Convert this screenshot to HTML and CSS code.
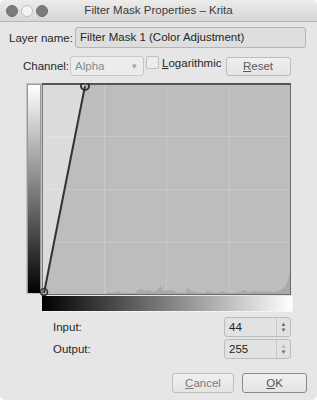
FILE: index.html
```html
<!DOCTYPE html>
<html lang="en">
<head>
    <meta charset="UTF-8">
    <meta name="viewport" content="width=device-width, initial-scale=1.0">
    <title>Filter Mask Properties – Krita</title>
    <link rel="stylesheet" href="styles.css">
</head>
<body>
    <div class="window">
        <div class="titlebar">
            <div class="lights">
                <span class="light dark"></span>
                <span class="light"></span>
                <span class="light dark"></span>
            </div>
            <div class="title">Filter Mask Properties – Krita</div>
        </div>

        <div class="content">
            <div class="row name-row">
                <label class="name-label">Layer name:</label>
                <div class="text-field">Filter Mask 1 (Color Adjustment)</div>
            </div>

            <div class="row channel-row">
                <label class="channel-label">Channel:</label>
                <div class="combo">
                    <span>Alpha</span>
                    <span class="combo-arrow">&#9662;</span>
                </div>
                <span class="checkbox"></span>
                <span class="check-label"><u>L</u>ogarithmic</span>
                <div class="button reset"><u>R</u>eset</div>
            </div>

            <div class="curve">
                <svg width="267" height="229" viewBox="0 0 267 229">
                    <defs>
                        <linearGradient id="vgrad" x1="0" y1="0" x2="0" y2="1">
                            <stop offset="0" stop-color="#ffffff"/>
                            <stop offset="1" stop-color="#000000"/>
                        </linearGradient>
                        <linearGradient id="hgrad" x1="0" y1="0" x2="1" y2="0">
                            <stop offset="0" stop-color="#000000"/>
                            <stop offset="1" stop-color="#ffffff"/>
                        </linearGradient>
                    </defs>
                    <!-- left value bar -->
                    <rect x="0.5" y="0.5" width="15" height="210" fill="#9a9a9a"/>
                    <rect x="2" y="2" width="12" height="208" fill="url(#vgrad)"/>
                    <!-- plot -->
                    <rect x="16" y="0" width="249" height="212" fill="#bdbdbd"/>
                    <polygon points="16,0 59,0 18,210 16,212" fill="#dcdcdc"/>
                    <g stroke="#ffffff" stroke-opacity="0.18" stroke-width="1">
                        <line x1="78.5" y1="0" x2="78.5" y2="212"/>
                        <line x1="140.5" y1="0" x2="140.5" y2="212"/>
                        <line x1="203.5" y1="0" x2="203.5" y2="212"/>
                        <line x1="16" y1="53.5" x2="265" y2="53.5"/>
                        <line x1="16" y1="106.5" x2="265" y2="106.5"/>
                        <line x1="16" y1="159.5" x2="265" y2="159.5"/>
                    </g>
                    <path d="M16 211 L80 211 L82 209 L86 210 L92 208 L96 210 L110 210 L112 207 L116 206 L118 208 L124 207 L126 209 L132 207 L134 203 L136 205 L138 208 L146 207 L150 209 L160 210 L162 204 L164 208 L178 210 L182 208 L186 209 L190 210 L196 208 L200 209 L206 210 L214 209 L218 207 L222 209 L230 208 L236 209 L242 208 L246 209 L252 208 L256 206 L260 203 L262 196 L264 190 L264 211 Z" fill="#a9a9a9"/>
                    <rect x="16.5" y="0.5" width="248" height="211" fill="none" stroke="#7a7a7a"/>
                    <line x1="16" y1="1" x2="265" y2="1" stroke="#555" stroke-width="2"/>
                    <line x1="264.5" y1="0" x2="264.5" y2="212" stroke="#6a6a6a"/>
                    <line x1="16" y1="211.5" x2="265" y2="211.5" stroke="#6a6a6a"/>
                    <!-- curve -->
                    <line x1="18" y1="210" x2="59" y2="3" stroke="#333" stroke-width="2"/>
                    <circle cx="59" cy="3" r="4" fill="none" stroke="#333" stroke-width="2"/>
                    <circle cx="18" cy="209" r="3.5" fill="none" stroke="#333" stroke-width="1.6"/>
                    <!-- bottom input bar -->
                    <rect x="16" y="213" width="251" height="16" fill="#f4f4f4"/>
                    <rect x="16" y="213" width="250" height="15" fill="url(#hgrad)"/>
                </svg>
            </div>

            <div class="values">
                <div class="value-row">
                    <span class="value-label">Input:</span>
                    <div class="spin">
                        <span class="spin-text">44</span>
                        <span class="spin-arrows"><i>&#9650;</i><i>&#9660;</i></span>
                    </div>
                </div>
                <div class="value-row">
                    <span class="value-label">Output:</span>
                    <div class="spin">
                        <span class="spin-text">255</span>
                        <span class="spin-arrows faded"><i>&#9650;</i><i>&#9660;</i></span>
                    </div>
                </div>
            </div>

            <div class="buttons">
                <div class="button cancel"><u>C</u>ancel</div>
                <div class="button ok"><u>O</u>K</div>
            </div>
        </div>
    </div>
</body>
</html>
```

FILE: styles.css
```css
body {
    margin: 0;
    background: #ffffff;
    font-family: "Liberation Sans", Arial, sans-serif;
    font-size: 11.5px;
    color: #262626;
}
.window {
    width: 317px;
    height: 400px;
    background: #e6e6e6;
    border-radius: 5px;
    overflow: hidden;
}
.titlebar {
    height: 22px;
    box-sizing: border-box;
    background: linear-gradient(#ececec, #d6d6d6);
    border-bottom: 1px solid #b8b8b8;
    display: flex;
    align-items: center;
    position: relative;
}
.lights {
    display: flex;
    gap: 3px;
    padding-left: 6px;
}
.light {
    width: 12px;
    height: 12px;
    border-radius: 50%;
    box-sizing: border-box;
    border: 1px solid #bdbdbd;
    background: #f4f4f4;
}
.light.dark {
    background: #7c7c7c;
    border-color: #6f6f6f;
}
.title {
    position: absolute;
    left: 0;
    right: 0;
    text-align: center;
    font-size: 11.5px;
    color: #3a3a3a;
    line-height: 21px;
}
.content {
    padding-top: 5px;
}
.row {
    display: flex;
    align-items: center;
    white-space: nowrap;
}
.row > * {
    flex-shrink: 0;
}
.name-row {
    padding-left: 9px;
    height: 21px;
}
.name-label {
    width: 66px;
}
.text-field {
    width: 231px;
    height: 21px;
    box-sizing: border-box;
    border: 1px solid #b4b4b4;
    border-radius: 3px;
    background: #dedede;
    padding-left: 4px;
    line-height: 19px;
}
.channel-row {
    margin-top: 8px;
    height: 20px;
    padding-left: 23px;
    align-items: flex-start;
}
.channel-label {
    margin-right: 1px;
    line-height: 20px;
}
.combo {
    width: 74px;
    height: 20px;
    box-sizing: border-box;
    border: 1px solid #c6c6c6;
    border-radius: 3px;
    background: #ececec;
    color: #8a8a8a;
    display: flex;
    justify-content: space-between;
    padding: 0 6px 0 4px;
    line-height: 18px;
}
.combo-arrow {
    font-size: 9px;
    color: #a0a0a0;
}
.checkbox {
    width: 13px;
    height: 13px;
    box-sizing: border-box;
    border: 1px solid #c0c0c0;
    border-radius: 2px;
    background: #ececec;
    margin-left: 2px;
}
.check-label {
    margin-left: 3px;
    line-height: 14px;
}
.button {
    box-sizing: border-box;
    border: 1px solid #bdbdbd;
    border-radius: 3px;
    background: linear-gradient(#f0f0f0, #e4e4e4);
    color: #5a5a5a;
    text-align: center;
}
.reset {
    width: 65px;
    height: 19px;
    line-height: 17px;
    margin-left: 4px;
    margin-top: 1px;
}
.curve {
    margin-top: 7px;
    padding-left: 26px;
    height: 229px;
}
.curve svg {
    display: block;
}
.values {
    margin-top: 5px;
    padding-left: 53px;
    width: 238px;
    display: flex;
    flex-direction: column;
    gap: 2px;
}
.value-row {
    display: flex;
    justify-content: space-between;
    align-items: center;
    height: 20px;
}
.spin {
    width: 67px;
    height: 20px;
    box-sizing: border-box;
    border: 1px solid #bcbcbc;
    border-radius: 3px;
    background: #e2e2e2;
    display: flex;
}
.spin-text {
    flex: 1;
    padding-left: 4px;
    line-height: 18px;
    color: #222;
}
.spin-arrows {
    width: 13px;
    border-left: 1px solid #c8c8c8;
    display: flex;
    flex-direction: column;
    align-items: center;
    justify-content: center;
    font-size: 6px;
    line-height: 6px;
    color: #6a6a6a;
}
.spin-arrows i {
    font-style: normal;
}
.spin-arrows.faded i:first-child {
    color: #b5b5b5;
}
.buttons {
    margin-top: 14px;
    display: flex;
    justify-content: flex-end;
    gap: 8px;
    padding-right: 10px;
}
.cancel {
    width: 62px;
    height: 20px;
    line-height: 18px;
    color: #7a7a7a;
}
.ok {
    width: 65px;
    height: 20px;
    line-height: 18px;
    border-color: #8a8a8a;
    color: #555;
}
```
